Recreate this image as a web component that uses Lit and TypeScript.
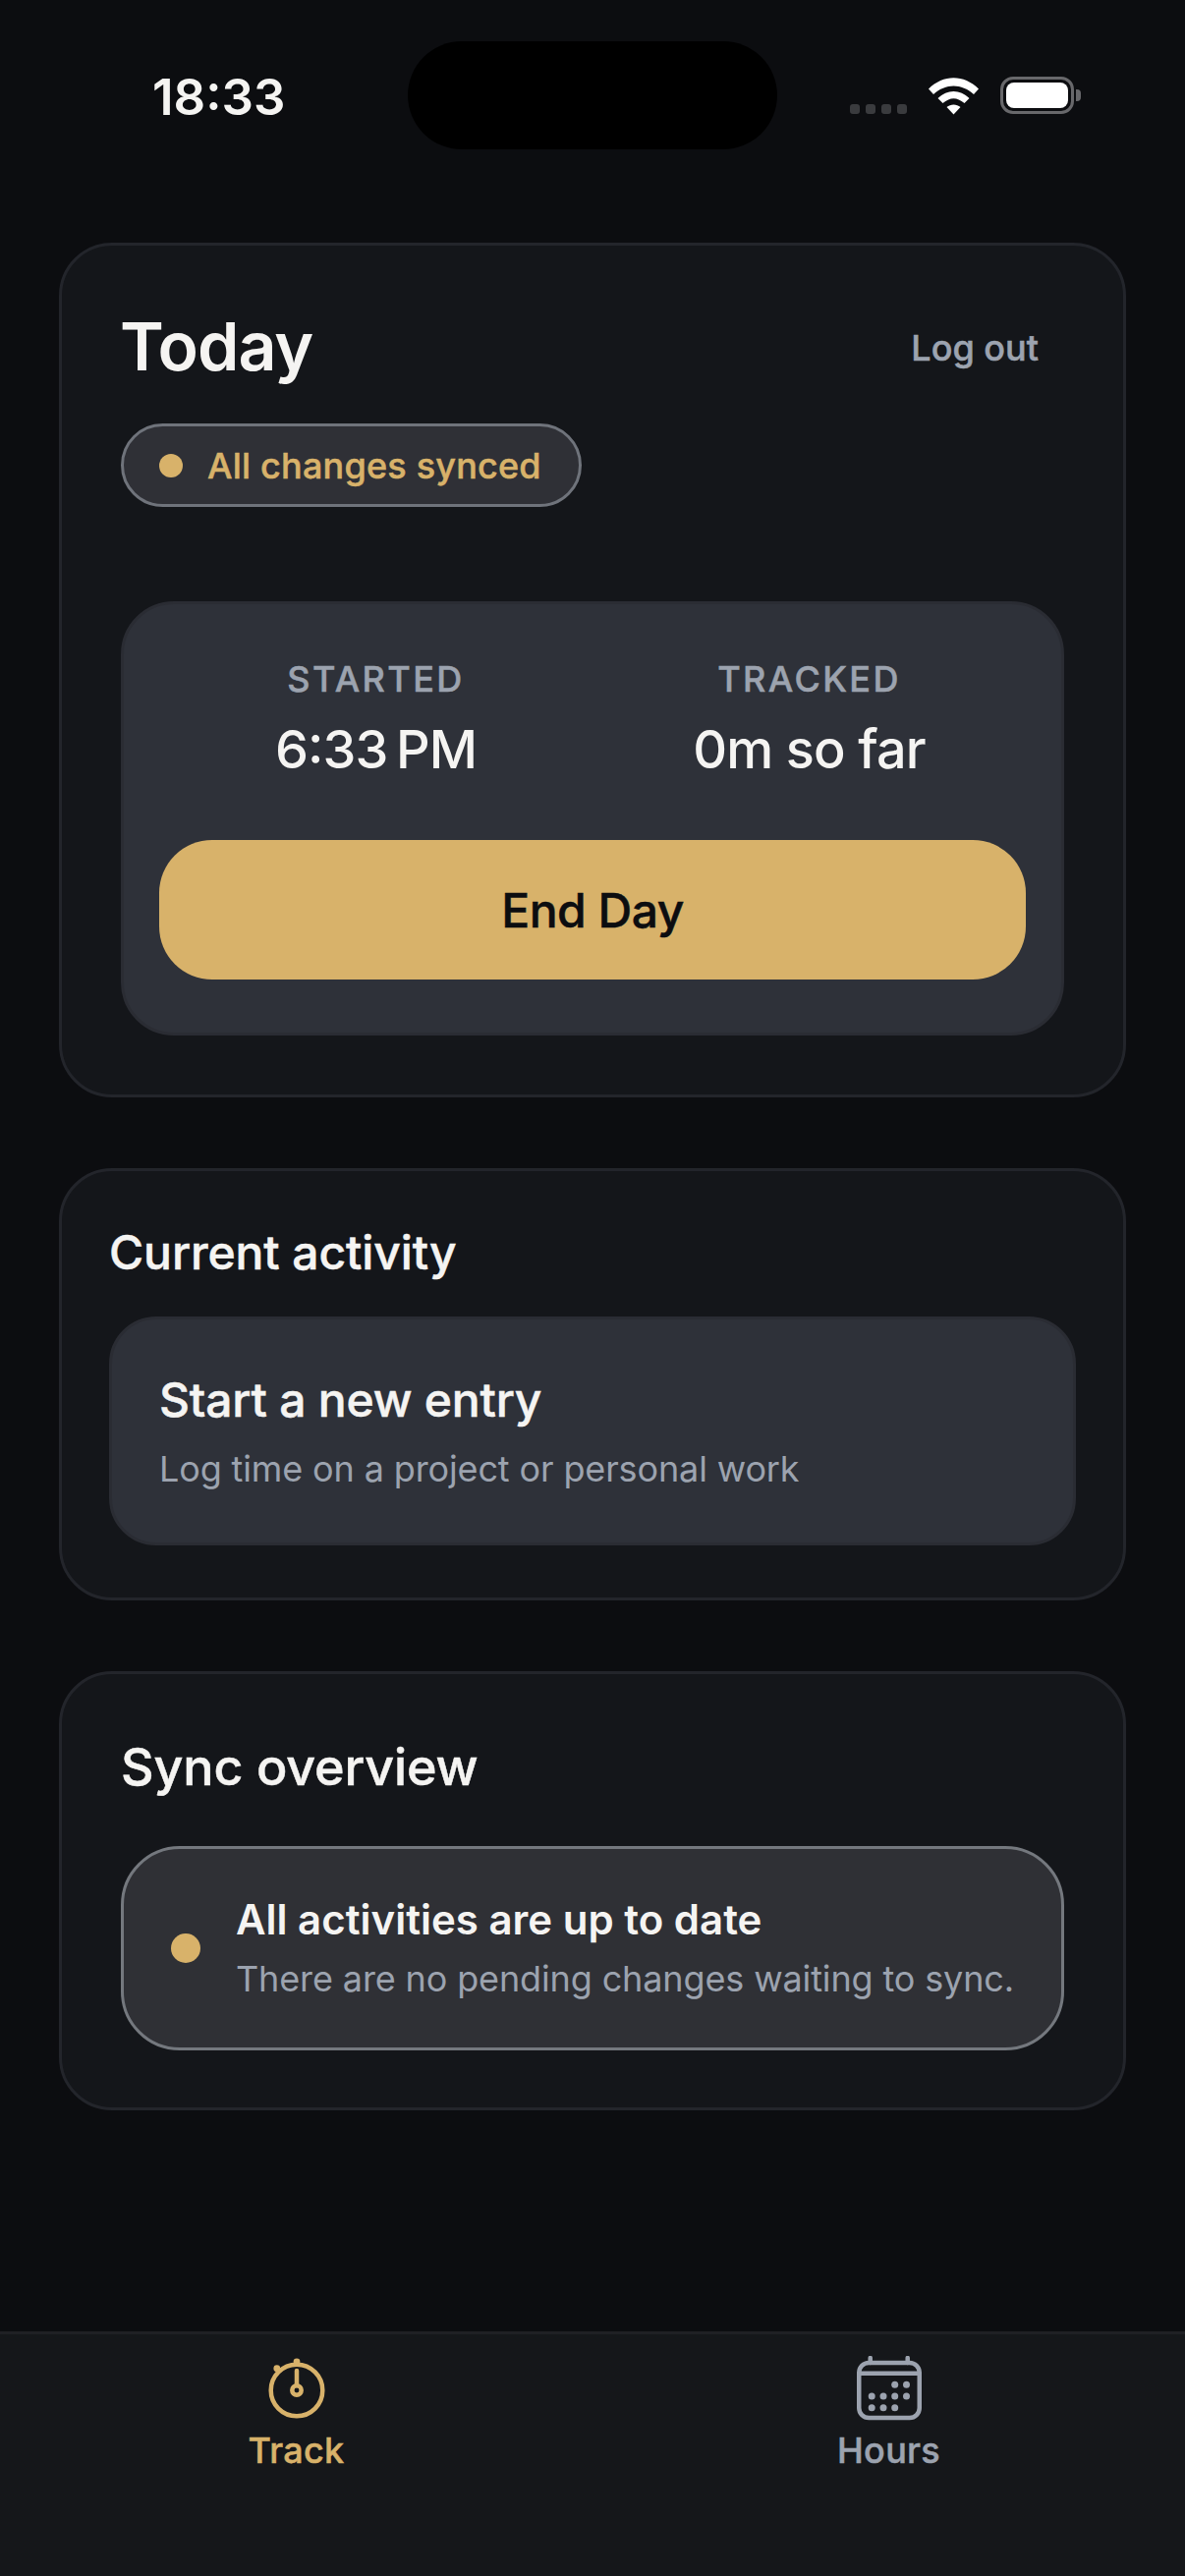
import { LitElement, html, css, svg } from 'lit';
import { customElement } from 'lit/decorators.js';

const stopwatch = svg`
  <circle cx="33" cy="35" r="26.3" fill="none" stroke="currentColor" stroke-width="4.5"/>
  <circle cx="33" cy="6" r="3.4" fill="currentColor"/>
  <circle cx="12.8" cy="12.7" r="3.4" fill="currentColor"/>
  <path d="M33 15V30" fill="none" stroke="currentColor" stroke-width="4.5" stroke-linecap="round"/>
  <circle cx="33" cy="35" r="4.7" fill="none" stroke="currentColor" stroke-width="4.5"/>`;

const calendarDots = [
  [38.7, 29.3], [50.5, 29.3],
  [15.2, 41], [27, 41], [38.7, 41], [50.5, 41],
  [15.2, 52.7], [27, 52.7], [38.7, 52.7],
];

const calendar = svg`
  <rect x="2.25" y="7" width="61.5" height="56" rx="10" fill="none" stroke="currentColor" stroke-width="4.5"/>
  <path d="M2.25 17.7H63.75M13.7 2v5M51.7 2v5" fill="none" stroke="currentColor" stroke-width="4.5" stroke-linecap="round"/>
  ${calendarDots.map(([x, y]) => svg`<circle cx=${x} cy=${y} r="3.5" fill="currentColor"/>`)}`;

@customElement('app-root')
export class AppRoot extends LitElement {
  static styles = css`
    :host {
      display: block;
      font-family: Inter, 'Noto Sans', sans-serif;
      color: #f5f4f2;
    }

    .screen {
      display: flex;
      flex-direction: column;
      height: 2622px;
      overflow: hidden;
      background: #0c0d10;
    }

    .status {
      display: grid;
      grid-template-columns: 415px 376px 1fr;
      grid-template-rows: 110px;
      margin-top: 42px;
      margin-bottom: 95px;
    }
    .clock {
      padding-left: 155px;
      font-size: 51px;
      font-weight: 600;
      line-height: 113px;
    }
    .island {
      background: #000;
      border-radius: 55px;
    }
    .indicators {
      display: flex;
      align-items: flex-start;
      padding: 36px 0 0 74px;
    }
    .signal {
      display: flex;
      gap: 6px;
      margin-top: 28px;
    }
    .signal i {
      width: 10px;
      height: 10px;
      border-radius: 3px;
      background: #3a3b3e;
    }
    .wifi {
      width: 51px;
      height: 38px;
      margin: 1px 22px 0 22px;
    }
    .battery {
      box-sizing: border-box;
      width: 75px;
      height: 38px;
      padding: 3px;
      border: 3px solid #68686b;
      border-radius: 13px;
    }
    .battery b {
      display: block;
      height: 100%;
      border-radius: 8px;
      background: #fff;
    }
    .nub {
      width: 5px;
      height: 12px;
      margin: 13px 0 0 2px;
      border-radius: 0 4px 4px 0;
      background: #68686b;
    }

    .cards {
      display: flex;
      flex-direction: column;
      gap: 72px;
      padding: 0 60px;
    }
    .card {
      box-sizing: border-box;
      border: 3px solid #23252b;
      border-radius: 54px;
      background: #14161a;
    }

    .today {
      padding: 60px;
    }
    .today-head {
      display: flex;
      justify-content: space-between;
      align-items: center;
      height: 84px;
    }
    h1 {
      margin: 0 0 0 -1px;
      font-size: 68px;
      font-weight: 600;
      letter-spacing: -1px;
    }
    /* the installed Inter only has whole weights, the thin stroke gives the in-between one */
    .logout,
    .pill,
    .label,
    .end,
    h2,
    .entry-title,
    .tab {
      font-weight: 500;
      -webkit-text-stroke: 0.5px;
    }
    .logout {
      padding: 3px 26px 0 0;
      color: #9ca3af;
      font-size: 36px;
    }
    .pill {
      display: inline-flex;
      align-items: center;
      gap: 25px;
      box-sizing: border-box;
      height: 85px;
      margin-top: 37px;
      padding: 0 38px 0 36px;
      border: 3px solid #6f737b;
      border-radius: 43px;
      background: #2f3036;
      color: #d8b26a;
      font-size: 36px;
      letter-spacing: 0.2px;
    }
    .dot {
      flex: none;
      width: 24px;
      height: 24px;
      border-radius: 50%;
      background: #d8b26a;
    }
    .session {
      box-sizing: border-box;
      height: 442px;
      margin-top: 96px;
      padding: 54px 36px 0;
      border: 3px solid #2a2c33;
      border-radius: 54px;
      background: #2e3139;
    }
    .stats {
      display: grid;
      grid-template-columns: 1fr 1fr;
      text-align: center;
    }
    .label {
      color: #9ca3af;
      font-size: 36px;
      letter-spacing: 2.4px;
      line-height: 44px;
    }
    .value {
      margin-top: 18px;
      font-size: 54px;
      font-weight: 500;
      font-feature-settings: 'calt' 1;
      letter-spacing: -0.9px;
      line-height: 64px;
    }
    .end {
      display: block;
      width: 100%;
      height: 142px;
      margin-top: 60px;
      border: 0;
      border-radius: 54px;
      background: #d8b26a;
      color: #0c0d10;
      font-family: inherit;
      font-size: 48px;
      letter-spacing: -0.5px;
    }

    .activity {
      padding: 53px 48px;
    }
    h2 {
      margin: 0;
      font-size: 48px;
      letter-spacing: -0.1px;
      line-height: 60px;
    }
    .entry {
      box-sizing: border-box;
      height: 233px;
      margin-top: 35px;
      padding: 52px 48px 0;
      border: 3px solid #2a2c33;
      border-radius: 48px;
      background: #2e3139;
    }
    .entry-title {
      font-size: 48px;
      letter-spacing: -0.2px;
      line-height: 60px;
    }
    .muted {
      color: #9ca3af;
      font-size: 36px;
      letter-spacing: -0.13px;
      line-height: 50px;
      white-space: nowrap;
    }
    .entry .muted {
      margin-top: 15px;
    }

    .sync {
      padding: 60px 60px 58px;
    }
    .sync h2 {
      font-size: 52px;
      letter-spacing: -0.13px;
      line-height: 70px;
    }
    .sync-row {
      display: flex;
      align-items: center;
      gap: 36px;
      box-sizing: border-box;
      height: 208px;
      margin-top: 45px;
      padding: 0 48px;
      border: 3px solid #74787e;
      border-radius: 60px;
      background: #2f3035;
    }
    .sync-row .dot {
      width: 30px;
      height: 30px;
    }
    .sync-title {
      font-size: 42px;
      font-weight: 600;
      line-height: 54px;
    }
    .sync-row .muted {
      margin-top: 8px;
    }

    nav {
      display: grid;
      grid-template-columns: 1fr 1fr;
      box-sizing: border-box;
      height: 249px;
      margin-top: auto;
      padding-top: 22px;
      border-top: 3px solid #1f2024;
      background: #15171a;
    }
    .tab {
      display: flex;
      flex-direction: column;
      align-items: center;
      color: #9ca3af;
      font-size: 36px;
      letter-spacing: 0.3px;
    }
    .tab.active {
      color: #d8b26a;
    }
    .tab svg {
      width: 66px;
      height: 68px;
      margin-bottom: 6px;
    }
  `;

  render() {
    return html`
      <div class="screen">
        <div class="status">
          <div class="clock">18:33</div>
          <div class="island"></div>
          <div class="indicators">
            <div class="signal"><i></i><i></i><i></i><i></i></div>
            <svg class="wifi" viewBox="0 0 51 38">
              <path d="M0 11.5C15 -3.5 36 -3.5 51 11.5L46 17C33.5 5.5 17.5 5.5 5 17Z" fill="#fff"/>
              <path d="M9.5 21C19 11.5 32 11.5 41.5 21L36.5 26C28.5 19.5 22.5 19.5 14.5 26Z" fill="#fff"/>
              <path d="M18.5 30C22.5 26.5 28.5 26.5 32.5 30L25.5 37.5Z" fill="#fff"/>
            </svg>
            <div class="battery"><b></b></div>
            <div class="nub"></div>
          </div>
        </div>

        <div class="cards">
          <section class="card today">
            <div class="today-head">
              <h1>Today</h1>
              <span class="logout">Log out</span>
            </div>
            <div class="pill"><span class="dot"></span>All changes synced</div>
            <div class="session">
              <div class="stats">
                <div>
                  <div class="label">STARTED</div>
                  <div class="value">6:33\u202fPM</div>
                </div>
                <div>
                  <div class="label">TRACKED</div>
                  <div class="value">0m so far</div>
                </div>
              </div>
              <button class="end">End Day</button>
            </div>
          </section>

          <section class="card activity">
            <h2>Current activity</h2>
            <div class="entry">
              <div class="entry-title">Start a new entry</div>
              <div class="muted">Log time on a project or personal work</div>
            </div>
          </section>

          <section class="card sync">
            <h2>Sync overview</h2>
            <div class="sync-row">
              <span class="dot"></span>
              <div>
                <div class="sync-title">All activities are up to date</div>
                <div class="muted">There are no pending changes waiting to sync.</div>
              </div>
            </div>
          </section>
        </div>

        <nav>
          <div class="tab active">
            <svg viewBox="0 0 66 68">${stopwatch}</svg>
            Track
          </div>
          <div class="tab">
            <svg viewBox="0 0 66 68">${calendar}</svg>
            Hours
          </div>
        </nav>
      </div>
    `;
  }
}
